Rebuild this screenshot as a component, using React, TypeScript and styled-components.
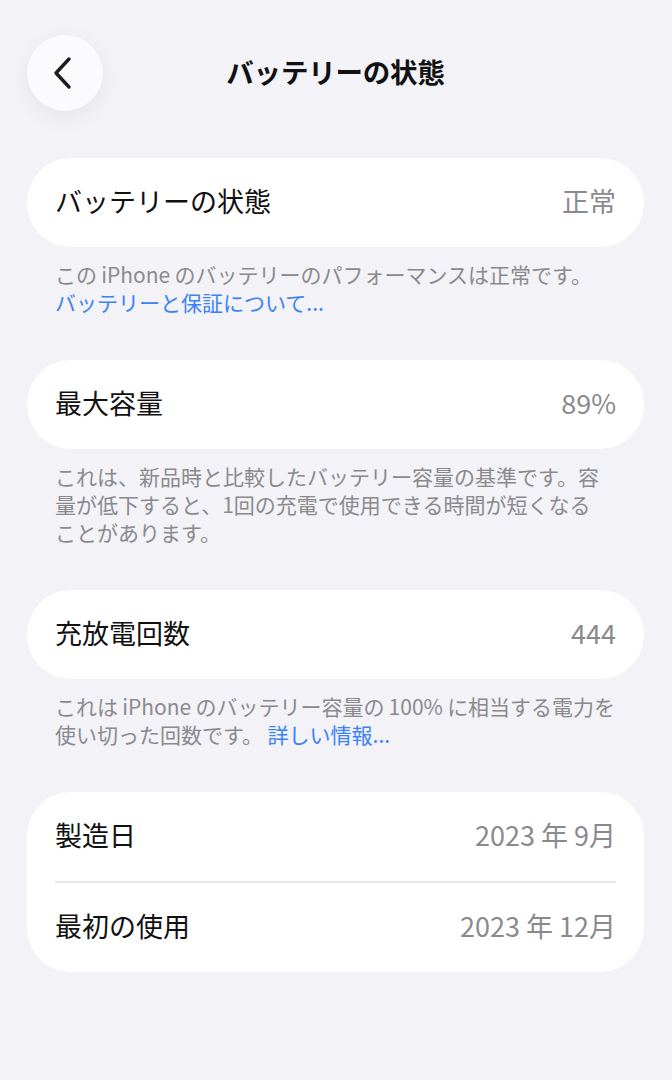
import styled, { createGlobalStyle } from 'styled-components'

const GlobalStyle = createGlobalStyle`
  html, body {
    margin: 0;
    padding: 0;
    background: #f2f2f7;
  }
  body {
    font-family: 'Noto Sans CJK JP', 'Noto Sans', sans-serif;
    -webkit-font-smoothing: antialiased;
  }
`

const Page = styled.div`
  width: 672px;
  min-height: 1080px;
  box-sizing: border-box;
  padding: 35px 28px 0 27px;
  background: #f2f2f7;
`

const Header = styled.div`
  display: grid;
  grid-template-columns: 76px 1fr 76px;
  align-items: center;
  height: 76px;
`

const BackButton = styled.button`
  width: 76px;
  height: 76px;
  border-radius: 50%;
  border: none;
  padding: 0 4px 0 0;
  background: #fbfbfd;
  box-shadow: 0 6px 22px rgba(0, 0, 0, 0.06);
  display: flex;
  align-items: center;
  justify-content: center;
`

const Title = styled.h1`
  margin: 0 0 4px;
  text-align: center;
  font-size: 27.5px;
  font-weight: 700;
  color: #111;
  letter-spacing: -0.2px;
`

const Spacer = styled.div``

const Sections = styled.div`
  display: flex;
  flex-direction: column;
  gap: 44px;
  margin-top: 47px;
`

const SectionBlock = styled.section`
  display: flex;
  flex-direction: column;
`

const Card = styled.div`
  background: #fff;
  border-radius: 44px;
  padding: 0 28px;
`

interface CardRowProps {
  $divided: boolean
}

const CardRow = styled.div<CardRowProps>`
  box-sizing: border-box;
  display: flex;
  align-items: center;
  justify-content: space-between;
  padding-bottom: 5px;
  height: ${({ $divided }) => ($divided ? '91px' : '89px')};
  border-top: ${({ $divided }) => ($divided ? '2px solid #e6e6ea' : 'none')};
`

const Label = styled.span`
  font-size: 27px;
  color: #111;
`

const Value = styled.span`
  font-size: 27px;
  color: #8a8a8e;
`

const Note = styled.p`
  margin: 13px 0 0;
  padding: 0 28px;
  font-size: 21px;
  line-height: 28px;
  color: #8a8a8e;
  white-space: nowrap;
`

const NoteLink = styled.span`
  color: #3a82f6;
`

interface Row {
  label: string
  value: string
}

interface Section {
  rows: Row[]
  note?: React.ReactNode
}

const sections: Section[] = [
  {
    rows: [{ label: 'バッテリーの状態', value: '正常' }],
    note: (
      <>
        この{'\u2009'}iPhone{'\u2009'}のバッテリーのパフォーマンスは正常です。
        <br />
        <NoteLink>バッテリーと保証について...</NoteLink>
      </>
    ),
  },
  {
    rows: [{ label: '最大容量', value: '89%' }],
    note: (
      <>
        これは、新品時と比較したバッテリー容量の基準です。容
        <br />
        量が低下すると、1回の充電で使用できる時間が短くなる
        <br />
        ことがあります。
      </>
    ),
  },
  {
    rows: [{ label: '充放電回数', value: '444' }],
    note: (
      <>
        これは{'\u2009'}iPhone{'\u2009'}のバッテリー容量の{'\u2009'}100%{'\u2009'}に相当する電力を
        <br />
        使い切った回数です。 <NoteLink>詳しい情報...</NoteLink>
      </>
    ),
  },
  {
    rows: [
      { label: '製造日', value: '2023 年 9月' },
      { label: '最初の使用', value: '2023 年 12月' },
    ],
  },
]

export default function App() {
  return (
    <Page>
      <GlobalStyle />
      <Header>
        <BackButton aria-label="戻る">
          <svg width="22" height="34" viewBox="0 0 22 34" fill="none">
            <path
              d="M17 3 L4 17 L17 31"
              stroke="#1c1c1e"
              strokeWidth="3.4"
              strokeLinecap="round"
              strokeLinejoin="round"
            />
          </svg>
        </BackButton>
        <Title>バッテリーの状態</Title>
        <Spacer />
      </Header>

      <Sections>
        {sections.map((section, i) => (
          <SectionBlock key={i}>
            <Card>
              {section.rows.map((row, j) => (
                <CardRow key={row.label} $divided={j > 0}>
                  <Label>{row.label}</Label>
                  <Value>{row.value}</Value>
                </CardRow>
              ))}
            </Card>
            {section.note && <Note>{section.note}</Note>}
          </SectionBlock>
        ))}
      </Sections>
    </Page>
  )
}
